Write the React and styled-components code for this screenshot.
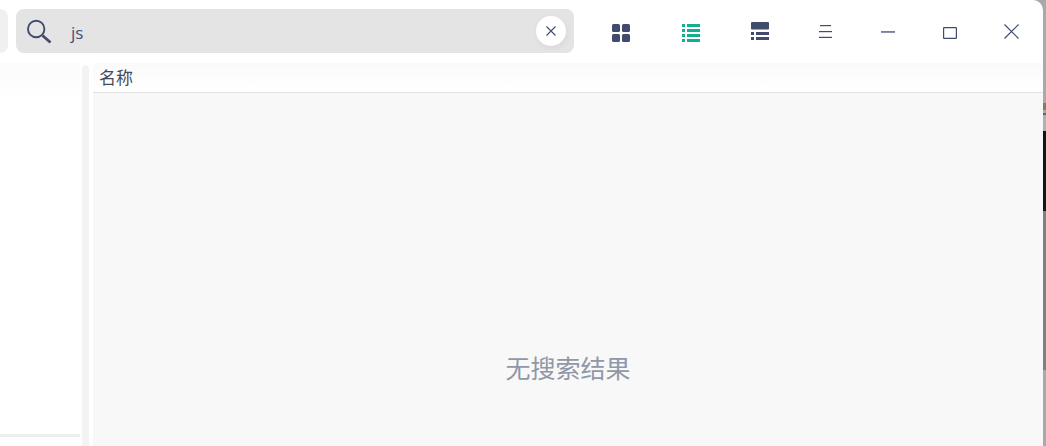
import styled, { createGlobalStyle } from "styled-components";

const Global = createGlobalStyle`
  html, body { margin: 0; padding: 0; background: #a8a8a8; }
  body { width: 1046px; height: 446px; overflow: hidden; font-family: "Open Sans", "Noto Sans CJK SC", sans-serif; }
`;

const Page = styled.div`
  display: flex;
  height: 446px;
  background: #a9a9a9;
`;

const Win = styled.div`
  width: 1043px;
  height: 446px;
  background: #fff;
  border-top-right-radius: 10px;
  display: flex;
  flex-direction: column;
  overflow: hidden;
`;

const Backdrop = styled.div`
  flex: 1;
  display: flex;
  flex-direction: column;
`;

const BackdropRow = styled.div`
  height: ${(p) => p.$h}px;
  flex: ${(p) => (p.$h ? "none" : 1)};
  background: ${(p) => p.$c};
`;

const TopBar = styled.div`
  height: 63px;
  display: flex;
  align-items: flex-start;
  padding-top: 9px;
  box-sizing: border-box;
  flex: none;
`;

const NavStub = styled.div`
  width: 8px;
  height: 44px;
  background: #f0f0f0;
  border-radius: 0 8px 8px 0;
  margin-right: 8px;
`;

const SearchBox = styled.div`
  width: 558px;
  height: 44px;
  background: #e4e4e4;
  border-radius: 8px;
  display: flex;
  align-items: center;
  padding: 0 8px 0 10px;
  box-sizing: border-box;
`;

const SearchText = styled.span`
  margin-left: 19px;
  flex: 1;
  font-size: 17px;
  color: #44507a;
  font-family: "Open Sans", sans-serif;
  position: relative;
  top: 1px;
`;

const ClearBtn = styled.div`
  width: 30px;
  height: 30px;
  border-radius: 50%;
  background: #fff;
  box-shadow: 1px 2px 6px rgba(0, 0, 0, 0.06);
  display: flex;
  align-items: center;
  justify-content: center;
`;

const Tools = styled.div`
  display: flex;
  align-items: flex-start;
  height: 44px;
  margin-left: 12px;
`;

// $top is where the icon starts inside the 44px bar
const Tool = styled.div`
  width: ${(p) => p.$w}px;
  height: 44px;
  box-sizing: border-box;
  padding-top: ${(p) => p.$top}px;
  display: flex;
  align-items: flex-start;
  justify-content: center;
  flex: none;
`;

const Body = styled.div`
  flex: 1;
  display: flex;
  background: #fff;
  min-height: 0;
`;

const Side = styled.div`
  width: 80px;
  flex: none;
  background: linear-gradient(#fbfbfb, #fff 40px);
  display: flex;
  flex-direction: column;
  justify-content: flex-end;
  padding-bottom: 9px;
  box-sizing: border-box;
`;

const SideLine = styled.div`
  height: 3px;
  background: #eeeeee;
`;

const Splitter = styled.div`
  width: 7px;
  margin: 2px 4px 0 2px;
  background: #f3f3f3;
  border-radius: 4px 4px 0 0;
  flex: none;
`;

const Main = styled.div`
  flex: 1;
  display: flex;
  flex-direction: column;
  min-width: 0;
`;

const TableHead = styled.div`
  height: 30px;
  box-sizing: border-box;
  flex: none;
  padding: 3px 0 0 6px;
  font-size: 17px;
  line-height: 22px;
  color: #454a58;
  font-family: "Noto Sans CJK SC", sans-serif;
  background: linear-gradient(#fafafa, #fff);
  border-bottom: 1px solid #e2e2e2;
`;

const Empty = styled.div`
  flex: 1;
  background: #f8f8f8;
  display: flex;
  justify-content: center;
  padding-top: 257px;
  box-sizing: border-box;
  font-size: 25px;
  line-height: 34px;
  color: #8f97a8;
  font-family: "Noto Sans CJK SC", sans-serif;
`;

const ink = "#414b6e";
const green = "#10b08f";

const GridIcon = () => (
  <svg width="18" height="18" viewBox="0 0 18 18" fill={ink}>
    <rect x="0" y="0" width="8" height="8" rx="1.5" />
    <rect x="10" y="0" width="8" height="8" rx="1.5" />
    <rect x="0" y="10" width="8" height="8" rx="1.5" />
    <rect x="10" y="10" width="8" height="8" rx="1.5" />
  </svg>
);

const ListIcon = () => (
  <svg width="18" height="18" viewBox="0 0 18 18" fill={green}>
    <rect x="0" y="0" width="3" height="3" />
    <rect x="5" y="0" width="13" height="3" />
    <rect x="0" y="5" width="3" height="3" />
    <rect x="5" y="5" width="13" height="3" />
    <rect x="0" y="10" width="3" height="3" />
    <rect x="5" y="10" width="13" height="3" />
    <rect x="0" y="15" width="3" height="3" />
    <rect x="5" y="15" width="13" height="3" />
  </svg>
);

const DetailIcon = () => (
  <svg width="18" height="18" viewBox="0 0 18 18" fill={ink}>
    <rect x="0" y="0" width="18" height="7.5" rx="1" />
    <rect x="0" y="10" width="3" height="3" />
    <rect x="5" y="10" width="13" height="3" />
    <rect x="0" y="15" width="3" height="3" />
    <rect x="5" y="15" width="13" height="3" />
  </svg>
);

const MenuIcon = () => (
  <svg width="13" height="13" viewBox="0 0 13 13" fill={ink}>
    <rect x="1" y="0" width="11" height="1.2" />
    <rect x="0" y="6" width="13" height="1.2" />
    <rect x="0" y="11.8" width="13" height="1.2" />
  </svg>
);

const stripRows = [
  { h: 103, c: "#a9a9a9" },
  { h: 7, c: "#8a7a5c" },
  { h: 3, c: "#a9a9a9" },
  { h: 2, c: "#666666" },
  { h: 16, c: "#b0b0b0" },
  { h: 80, c: "#141414" },
  { h: 159, c: "#7f7f7f" },
  { h: 0, c: "#a9a9a9" },
];

const App = () => (
  <Page>
    <Global />
    <Win>
      <TopBar>
        <NavStub />
        <SearchBox>
          <svg width="26" height="26" viewBox="0 0 26 26" fill="none" stroke={ink}>
            <circle cx="10.2" cy="11" r="8.2" strokeWidth="1.9" />
            <line x1="16.5" y1="17.5" x2="24.5" y2="24.5" strokeWidth="2.8" />
          </svg>
          <SearchText>js</SearchText>
          <ClearBtn>
            <svg width="10" height="10" viewBox="0 0 10 10" stroke={ink} strokeWidth="1.1">
              <path d="M0.5 0.5 L9.5 9.5 M9.5 0.5 L0.5 9.5" />
            </svg>
          </ClearBtn>
        </SearchBox>
        <Tools>
          <Tool $w={70} $top={15}><GridIcon /></Tool>
          <Tool $w={70} $top={15}><ListIcon /></Tool>
          <Tool $w={67} $top={13}><DetailIcon /></Tool>
          <Tool $w={64} $top={16}><MenuIcon /></Tool>
          <Tool $w={62} $top={22}>
            <svg width="14" height="2" viewBox="0 0 14 2" fill={ink}><rect width="14" height="1.3" y="0.3" /></svg>
          </Tool>
          <Tool $w={62} $top={18}>
            <svg width="14" height="12" viewBox="0 0 14 12" fill="none" stroke={ink} strokeWidth="1.2"><rect x="0.6" y="0.6" width="12.8" height="10.8" rx="0.5" /></svg>
          </Tool>
          <Tool $w={60} $top={15}>
            <svg width="15" height="15" viewBox="0 0 15 15" stroke={ink} strokeWidth="1.2"><path d="M0.5 0.5 L14.5 14.5 M14.5 0.5 L0.5 14.5" /></svg>
          </Tool>
        </Tools>
      </TopBar>
      <Body>
        <Side><SideLine /></Side>
        <Splitter />
        <Main>
          <TableHead>名称</TableHead>
          <Empty>无搜索结果</Empty>
        </Main>
      </Body>
    </Win>
    <Backdrop>
      {stripRows.map((row, i) => (
        <BackdropRow key={i} $h={row.h} $c={row.c} />
      ))}
    </Backdrop>
  </Page>
);

export default App;
